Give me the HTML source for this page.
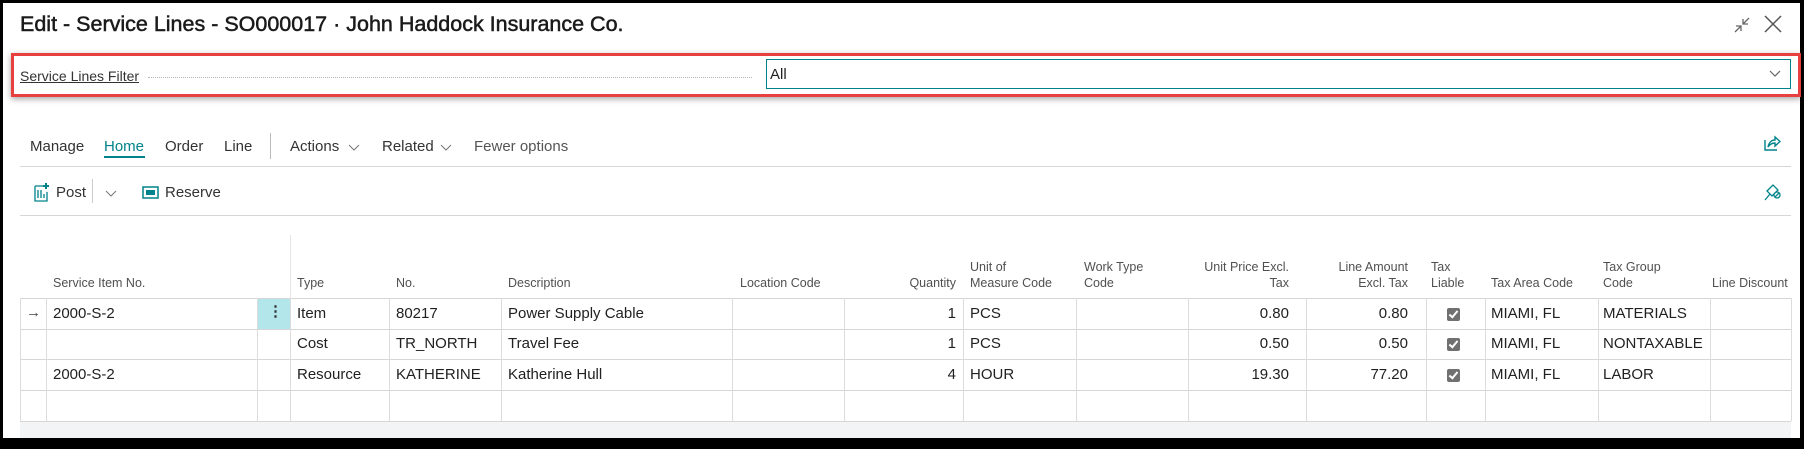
<!DOCTYPE html>
<html><head><meta charset="utf-8"><style>
*{margin:0;padding:0;box-sizing:border-box}
body{width:1804px;height:449px;background:#000;position:relative;overflow:hidden;font-family:"Liberation Sans",sans-serif;color:#212121}
.pg{position:absolute;left:3px;top:3px;width:1797px;height:435px;background:#fff}
.a{position:absolute;white-space:nowrap}
.t{font-size:15px}
.h{font-size:12.5px;color:#505050;line-height:16px}
.vl{position:absolute;width:1px;background:#dcdcdc}
.hl{position:absolute;height:1px;background:#d6d6d6;left:20px;width:1771px}
.cb{position:absolute;width:13px;height:13px;background:#707070;border-radius:2px;left:1447px}
.cb:after{content:"";position:absolute;left:4px;top:1px;width:3px;height:7px;border:solid #fff;border-width:0 2px 2px 0;transform:rotate(40deg)}
.r{text-align:right}
</style></head><body>
<div class="pg"></div>
<div class="a" style="left:20px;top:12px;font-size:21.5px;font-weight:normal;color:#1a1a1a;-webkit-text-stroke:0.5px #1a1a1a">Edit - Service Lines - SO000017 · John Haddock Insurance Co.</div>
<svg class="a" style="left:1732px;top:15px" width="20" height="20" viewBox="0 0 20 20" fill="none" stroke="#666" stroke-width="1.3"><path d="M3 17L9 11M4 11H9V16M17 3L11 9M11 4V9H16"/></svg>
<svg class="a" style="left:1763px;top:14px" width="20" height="20" viewBox="0 0 20 20" stroke="#555" stroke-width="1.5"><path d="M2 2L18 18M18 2L2 18"/></svg>
<div class="a" style="left:11px;top:53px;width:1790px;height:44px;border:3px solid #e8403f;box-shadow:0 2px 6px rgba(0,0,0,.35)"></div>
<div class="a" style="left:20px;top:68px;font-size:14px;color:#333;text-decoration:underline">Service Lines Filter</div>
<div class="a" style="left:148px;top:77px;width:604px;border-top:1px dotted #b5b5b5"></div>
<div class="a" style="left:766px;top:59px;width:1025px;height:30px;border:1px solid #00838a"></div>
<div class="a" style="left:770px;top:66px;font-size:15px">All</div>
<svg class="a" style="left:1769px;top:70px" width="12" height="8" viewBox="0 0 12 8" fill="none" stroke="#666" stroke-width="1.2"><path d="M1 1L6 6L11 1"/></svg>
<div class="a" style="left:30px;top:138px;font-size:15px;color:#333">Manage</div>
<div class="a" style="left:104px;top:138px;font-size:15px;color:#00838a">Home</div>
<div class="a" style="left:104px;top:156px;width:41px;height:2px;background:#00838a"></div>
<div class="a" style="left:165px;top:138px;font-size:15px;color:#333">Order</div>
<div class="a" style="left:224px;top:138px;font-size:15px;color:#333">Line</div>
<div class="a" style="left:270px;top:133px;width:1px;height:26px;background:#bbb"></div>
<div class="a" style="left:290px;top:138px;font-size:15px;color:#333">Actions</div>
<svg class="a" style="left:348px;top:144px" width="12" height="8" viewBox="0 0 12 8" fill="none" stroke="#777" stroke-width="1"><path d="M1 1L6 6L11 1"/></svg>
<div class="a" style="left:382px;top:138px;font-size:15px;color:#333">Related</div>
<svg class="a" style="left:440px;top:144px" width="12" height="8" viewBox="0 0 12 8" fill="none" stroke="#777" stroke-width="1"><path d="M1 1L6 6L11 1"/></svg>
<div class="a" style="left:474px;top:138px;font-size:15px;color:#555">Fewer options</div>
<svg class="a" style="left:1763px;top:134px" width="18" height="18" viewBox="0 0 18 18" fill="none" stroke="#00838a" stroke-width="1.4"><path d="M2 6V16H14M5 13C6 8 9 6 12 6V3L17 7.5L12 12V9C9 9 7 10 5 13Z"/></svg>
<div class="a" style="left:20px;top:166px;width:1771px;height:1px;background:#d6d6d6"></div>
<svg class="a" style="left:34px;top:182px" width="16" height="20" viewBox="0 0 16 20" fill="none" stroke="#00838a" stroke-width="1.3"><path d="M1 4H9M1 4V19H13V10M4 8V16M7 8V16M10 12V16"/><path d="M12 1V7M9 4H15" stroke-width="2"/></svg>
<div class="a" style="left:56px;top:184px;font-size:15px;color:#333">Post</div>
<div class="a" style="left:92px;top:179px;width:1px;height:24px;background:#ccc"></div>
<svg class="a" style="left:105px;top:190px" width="12" height="8" viewBox="0 0 12 8" fill="none" stroke="#777" stroke-width="1"><path d="M1 1L6 6L11 1"/></svg>
<svg class="a" style="left:142px;top:186px" width="17" height="13" viewBox="0 0 17 13"><rect x="1" y="1" width="15" height="11" fill="none" stroke="#00838a" stroke-width="1.5"/><rect x="4" y="4" width="9" height="5" fill="#00838a"/></svg>
<div class="a" style="left:165px;top:184px;font-size:15px;color:#333">Reserve</div>
<svg class="a" style="left:1763px;top:182px" width="18" height="20" viewBox="0 0 18 20" fill="none" stroke="#00838a" stroke-width="1.3"><path d="M2 18L7 12M4 9L10 3L15 8L9 14ZM11 13A3 3 0 1 0 17 13A3 3 0 1 0 11 13M12 15L16 11"/></svg>
<div class="a" style="left:20px;top:215px;width:1771px;height:1px;background:#d6d6d6"></div>
<div class="vl" style="left:290px;top:235px;height:63px;background:#e6e6e6"></div>
<div class="a h" style="left:53px;top:275px">Service Item No.</div>
<div class="a h" style="left:297px;top:275px">Type</div>
<div class="a h" style="left:396px;top:275px">No.</div>
<div class="a h" style="left:508px;top:275px">Description</div>
<div class="a h" style="left:740px;top:275px">Location Code</div>
<div class="a h r" style="left:880px;width:76px;top:275px">Quantity</div>
<div class="a h" style="left:970px;top:259px">Unit of<br>Measure Code</div>
<div class="a h" style="left:1084px;top:259px">Work Type<br>Code</div>
<div class="a h r" style="left:1190px;width:99px;top:259px">Unit Price Excl.<br>Tax</div>
<div class="a h r" style="left:1310px;width:98px;top:259px">Line Amount<br>Excl. Tax</div>
<div class="a h" style="left:1431px;top:259px">Tax<br>Liable</div>
<div class="a h" style="left:1491px;top:275px">Tax Area Code</div>
<div class="a h" style="left:1603px;top:259px">Tax Group<br>Code</div>
<div class="a h" style="left:1712px;top:275px;width:79px;overflow:hidden">Line Discount</div>
<div class="a" style="left:257px;top:298px;width:33px;height:31px;background:#b2e6eb"></div>
<div class="a" style="left:20px;top:421px;width:1771px;height:17px;background:#f3f4f5"></div>
<div class="hl" style="top:298px"></div>
<div class="hl" style="top:329px"></div>
<div class="hl" style="top:359px"></div>
<div class="hl" style="top:390px"></div>
<div class="hl" style="top:421px"></div>
<div class="vl" style="left:20px;top:298px;height:123px"></div>
<div class="vl" style="left:46px;top:298px;height:123px"></div>
<div class="vl" style="left:257px;top:298px;height:123px"></div>
<div class="vl" style="left:290px;top:298px;height:123px"></div>
<div class="vl" style="left:389px;top:298px;height:123px"></div>
<div class="vl" style="left:501px;top:298px;height:123px"></div>
<div class="vl" style="left:732px;top:298px;height:123px"></div>
<div class="vl" style="left:844px;top:298px;height:123px"></div>
<div class="vl" style="left:963px;top:298px;height:123px"></div>
<div class="vl" style="left:1076px;top:298px;height:123px"></div>
<div class="vl" style="left:1188px;top:298px;height:123px"></div>
<div class="vl" style="left:1306px;top:298px;height:123px"></div>
<div class="vl" style="left:1426px;top:298px;height:123px"></div>
<div class="vl" style="left:1485px;top:298px;height:123px"></div>
<div class="vl" style="left:1598px;top:298px;height:123px"></div>
<div class="vl" style="left:1710px;top:298px;height:123px"></div>
<div class="vl" style="left:1791px;top:298px;height:123px"></div>
<div class="a t" style="left:26px;top:304px;color:#444">→</div>
<div class="a t" style="left:268px;top:302px;font-weight:bold;color:#333">⋮</div>
<div class="a t" style="left:53px;top:305px">2000-S-2</div>
<div class="a t" style="left:297px;top:305px">Item</div>
<div class="a t" style="left:396px;top:305px">80217</div>
<div class="a t" style="left:508px;top:305px">Power Supply Cable</div>
<div class="a t r" style="left:900px;width:56px;top:305px">1</div>
<div class="a t" style="left:970px;top:305px">PCS</div>
<div class="a t r" style="left:1190px;width:99px;top:305px">0.80</div>
<div class="a t r" style="left:1310px;width:98px;top:305px">0.80</div>
<div class="cb" style="top:308px"></div>
<div class="a t" style="left:1491px;top:305px">MIAMI, FL</div>
<div class="a t" style="left:1603px;top:305px">MATERIALS</div>
<div class="a t" style="left:297px;top:335px">Cost</div>
<div class="a t" style="left:396px;top:335px">TR_NORTH</div>
<div class="a t" style="left:508px;top:335px">Travel Fee</div>
<div class="a t r" style="left:900px;width:56px;top:335px">1</div>
<div class="a t" style="left:970px;top:335px">PCS</div>
<div class="a t r" style="left:1190px;width:99px;top:335px">0.50</div>
<div class="a t r" style="left:1310px;width:98px;top:335px">0.50</div>
<div class="cb" style="top:338px"></div>
<div class="a t" style="left:1491px;top:335px">MIAMI, FL</div>
<div class="a t" style="left:1603px;top:335px">NONTAXABLE</div>
<div class="a t" style="left:53px;top:366px">2000-S-2</div>
<div class="a t" style="left:297px;top:366px">Resource</div>
<div class="a t" style="left:396px;top:366px">KATHERINE</div>
<div class="a t" style="left:508px;top:366px">Katherine Hull</div>
<div class="a t r" style="left:900px;width:56px;top:366px">4</div>
<div class="a t" style="left:970px;top:366px">HOUR</div>
<div class="a t r" style="left:1190px;width:99px;top:366px">19.30</div>
<div class="a t r" style="left:1310px;width:98px;top:366px">77.20</div>
<div class="cb" style="top:369px"></div>
<div class="a t" style="left:1491px;top:366px">MIAMI, FL</div>
<div class="a t" style="left:1603px;top:366px">LABOR</div>
</body></html>
